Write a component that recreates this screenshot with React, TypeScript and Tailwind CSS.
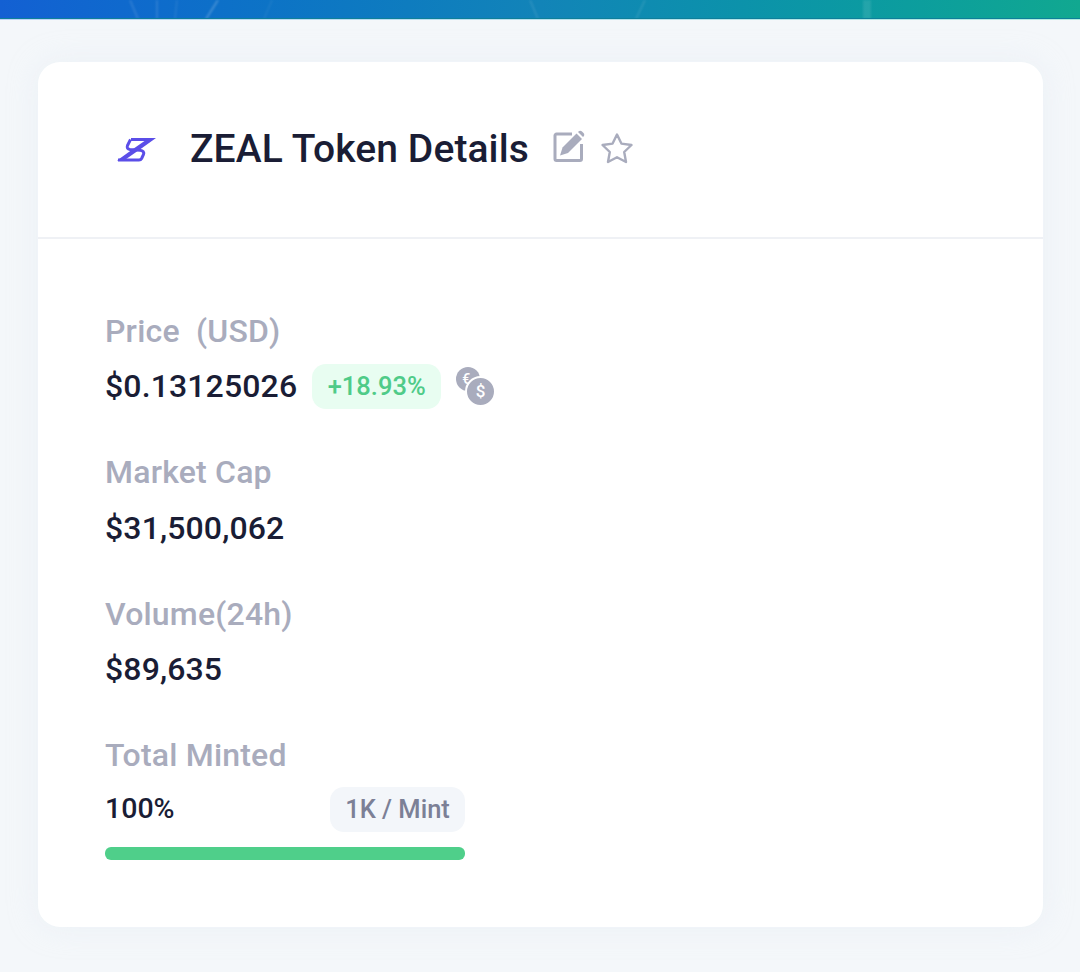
const stats = [
  { label: 'Market Cap', value: '$31,500,062' },
  { label: 'Volume(24h)', value: '$89,635' },
];

const ZealLogo = () => (
  <svg width="42" height="28" viewBox="0 0 42 28" fill="none">
    <path d="M16 3H41L27 13L9 25.5H2L18 14L29.5 6H16Z" fill="#5b4ee8" />
    <path
      d="M15.5 4.5L12.5 10.5C11.6 12.8 12.6 14.2 15 14.5L25 15.3C28.2 15.6 29.4 17.4 28.4 19.6L26.6 23.5C26 24.6 25.2 25 24 25H3"
      stroke="#5b4ee8"
      strokeWidth="3"
      strokeLinejoin="round"
    />
  </svg>
);

const EditIcon = () => (
  <svg width="34" height="34" viewBox="0 0 34 34" fill="none">
    <path d="M20 5H4.5C3.7 5 3 5.7 3 6.5V30C3 30.8 3.7 31.5 4.5 31.5H28C28.8 31.5 29.5 30.8 29.5 30V15" stroke="#a9acbd" strokeWidth="3" />
    <path d="M8 26.5L10.5 18.5L24.5 4.5L30 10L16 24L8 26.5Z" fill="#a9acbd" />
    <path d="M26.5 2.5C27.5 1.5 29 1.5 30 2.5L31.5 4C32.5 5 32.5 6.5 31.5 7.5L31 8L26 3L26.5 2.5Z" fill="#a9acbd" />
  </svg>
);

const StarIcon = () => (
  <svg width="34" height="32" viewBox="0 0 34 32" fill="none">
    <path
      d="M17 2.5L21.4 11.6L31.5 13L24.2 20L26 30L17 25.2L8 30L9.8 20L2.5 13L12.6 11.6L17 2.5Z"
      stroke="#a9acbd"
      strokeWidth="2.4"
      strokeLinejoin="round"
    />
  </svg>
);

const CurrencyIcon = () => (
  <div className="relative w-[38px] h-[38px] font-medium text-white">
    <div className="absolute left-0 top-0 w-[24px] h-[24px] rounded-full bg-[#a9acbd] flex items-center justify-center text-[14px] pr-1">
      €
    </div>
    <div className="absolute left-[11px] top-[11px] w-[27px] h-[27px] rounded-full bg-[#a9acbd] border-2 border-white box-content -m-[2px] flex items-center justify-center text-[17px]">
      $
    </div>
  </div>
);

const Banner = () => (
  <div className="relative h-[19px] bg-gradient-to-r from-[#1360d3] via-[#1284b8] to-[#11a890] border-b border-[#0f7f9a] overflow-hidden">
    {/* faint streaks from the hero image */}
    <svg className="absolute inset-0 blur-[1px]" width="1080" height="19" fill="none" stroke="#ffffff">
      <path d="M130 0L138 19" strokeOpacity="0.12" strokeWidth="2" />
      <path d="M157 0V19" strokeOpacity="0.12" strokeWidth="2" />
      <path d="M177 0L175 19" strokeOpacity="0.08" strokeWidth="2" />
      <path d="M218 0L206 19" strokeOpacity="0.22" strokeWidth="2" />
      <path d="M272 0L264 19" strokeOpacity="0.06" strokeWidth="2" />
      <path d="M530 0L538 19" strokeOpacity="0.1" strokeWidth="2" />
      <path d="M645 0L636 19" strokeOpacity="0.1" strokeWidth="2" />
      <path d="M867 0V19" strokeOpacity="0.1" strokeWidth="8" />
    </svg>
  </div>
);

const Label = ({ children }: { children: React.ReactNode }) => (
  <p className="text-[32px] leading-[36px] font-medium tracking-[0.2px] text-[#a9acbd] whitespace-pre">{children}</p>
);

const Value = ({ children }: { children: React.ReactNode }) => (
  <p className="text-[32px] leading-[40px] font-medium tracking-[0.13px] text-[#1a1d35]">{children}</p>
);

export default function App() {
  return (
    <div className="w-[1080px] h-[972px] overflow-hidden bg-[#f4f7fa] font-['Roboto',sans-serif]">
      <Banner />
      <div className="h-[1px] bg-gradient-to-r from-[#bcd4fa] to-[#b0ece0]" />
      <div className="pt-[42px] pl-[38px]">
        <div className="w-[1005px] h-[865px] bg-white rounded-[22px] shadow-[0_0_30px_rgba(220,228,240,0.35)]">
          <div className="h-[177px] border-b-2 border-[#eff1f5] pl-[77px] pt-[68px] flex items-start">
            <div className="mt-[5px]">
              <ZealLogo />
            </div>
            <h1 className="ml-[33px] text-[39px] leading-[38px] font-medium tracking-[0.1px] text-[#1a1d35]">ZEAL Token Details</h1>
            <div className="ml-[23px] -mt-[1px]">
              <EditIcon />
            </div>
            <div className="ml-[14px] mt-[2px]">
              <StarIcon />
            </div>
          </div>

          <div className="pl-[67px] pt-[74px]">
            <Label>Price  (USD)</Label>
            <div className="mt-[14px] flex items-center h-[46px]">
              <Value>$0.13125026</Value>
              <span className="ml-[15px] h-[45px] w-[129px] rounded-[14px] bg-[#e8fdf1] flex items-center justify-center text-[25.5px] font-medium text-[#4fcb88]">
                +18.93%
              </span>
              <div className="ml-[15px]">
                <CurrencyIcon />
              </div>
            </div>

            {stats.map((s, i) => (
              <div key={s.label} className={i === 0 ? 'mt-[45px]' : 'mt-[48px]'}>
                <Label>{s.label}</Label>
                <div className={i === 0 ? 'mt-[18px]' : 'mt-[17px]'}>
                  <Value>{s.value}</Value>
                </div>
              </div>
            ))}

            <div className="mt-[48px] w-[360px]">
              <Label>Total Minted</Label>
              <div className="mt-[14px] flex items-center justify-between">
                <span className="text-[28.5px] font-medium text-[#1a1d35]">100%</span>
                <span className="h-[45px] w-[135px] rounded-[14px] bg-[#f3f6fa] flex items-center justify-center text-[25.5px] font-medium text-[#7c8096]">
                  1K / Mint
                </span>
              </div>
              <div className="mt-[15px] h-[13px] rounded-[6px] bg-[#4fcf8a]" />
            </div>
          </div>
        </div>
      </div>
    </div>
  );
}
